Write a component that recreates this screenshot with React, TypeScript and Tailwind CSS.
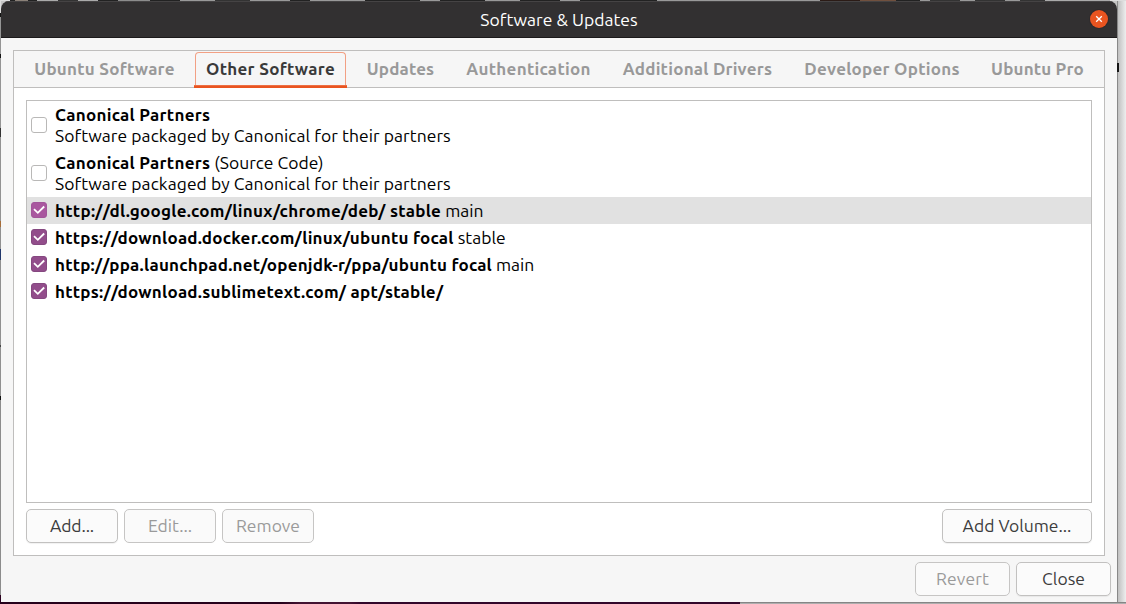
import type { ReactNode } from "react";

type Tab = { label: string; box: string };

const tabs: Tab[] = [
  { label: "Ubuntu Software", box: "w-[165px] tracking-[0.26px]" },
  { label: "Other Software", box: "w-[153px] tracking-[0.3px]" },
  { label: "Updates", box: "w-[93px] tracking-[0.18px]" },
  { label: "Authentication", box: "w-[149px] tracking-[0.3px]" },
  { label: "Additional Drivers", box: "w-[175px] tracking-[0.24px]" },
  { label: "Developer Options", box: "w-[180px] tracking-[0.25px]" },
  { label: "Ubuntu Pro", box: "w-[117px] tracking-[0.17px]" },
];

type Source = {
  name: string;
  nameClass: string;
  suffix?: string;
  description?: string;
  checked?: boolean;
  selected?: boolean;
};

const sources: Source[] = [
  {
    name: "Canonical Partners",
    nameClass: "tracking-[0.28px]",
    description: "Software packaged by Canonical for their partners",
  },
  {
    name: "Canonical Partners",
    nameClass: "tracking-[0.28px]",
    suffix: "(Source Code)",
    description: "Software packaged by Canonical for their partners",
  },
  {
    name: "http://dl.google.com/linux/chrome/deb/ stable",
    nameClass: "tracking-[0.28px]",
    suffix: "main",
    checked: true,
    selected: true,
  },
  {
    name: "https://download.docker.com/linux/ubuntu focal",
    nameClass: "tracking-[0.25px]",
    suffix: "stable",
    checked: true,
  },
  {
    name: "http://ppa.launchpad.net/openjdk-r/ppa/ubuntu focal",
    nameClass: "tracking-[0.21px]",
    suffix: "main",
    checked: true,
  },
  {
    name: "https://download.sublimetext.com/ apt/stable/",
    nameClass: "tracking-[0.25px]",
    checked: true,
  },
];

function Button({
  children,
  className,
  disabled = false,
}: {
  children: ReactNode;
  className: string;
  disabled?: boolean;
}) {
  return (
    <button
      disabled={disabled}
      className={`flex h-[34px] shrink-0 items-center justify-center rounded-[5px] border pb-0.5 ${
        disabled
          ? "border-[#c6c5c4] bg-[#fafafa] text-[#9a9a9a]"
          : "border-[#c2c1c0] bg-[#fbfbfb] text-[#3d3d3d] shadow-[0_1px_1px_rgba(0,0,0,0.06)]"
      } ${className}`}
    >
      {children}
    </button>
  );
}

function CheckBox({ checked, light }: { checked?: boolean; light?: boolean }) {
  if (!checked) {
    return <span className="size-4 shrink-0 rounded-[3px] border border-[#b9b8b7] bg-white" />;
  }
  return (
    <span
      className={`flex size-4 shrink-0 items-center justify-center rounded-[3px] border ${
        light ? "border-[#a2569a] bg-[#a9589f]" : "border-[#854880] bg-[#924d8b]"
      }`}
    >
      <svg viewBox="0 0 14 14" className="size-3.5" fill="none" stroke="white" strokeWidth="1.8">
        <path d="M2 6.2 L5.8 9.8 L12.2 3.5" />
      </svg>
    </span>
  );
}

export default function App() {
  return (
    <div className="flex h-[604px] w-[1126px] flex-col overflow-hidden bg-[#8f8f8f] font-['Ubuntu','Noto_Sans',sans-serif] text-[17.5px] leading-[21px]">
      <div className="h-px shrink-0 bg-[linear-gradient(90deg,#ddd_0_10px,#222_10px_15px,#8b8178_15px_28px,#222_28px_37px,#aaa_37px_58px,#333_58px_78px,#aaa_78px_98px,#222_98px_118px,#8c8c8c_118px_150px,#222_150px_180px,#999_180px_215px,#333_215px_250px,#999_250px_290px,#222_290px_310px,#999_310px_365px,#222_365px_420px,#999_420px_440px,#222_440px_485px,#999_485px_520px,#222_520px_560px,#999_560px_580px,#222_580px_657px,#999_657px_820px,#2b1b16_820px_860px,#70503e_860px_896px,#222_896px_920px,#999_920px_930px,#333_930px_960px,#999_960px_975px,#333_975px_1005px,#999_1005px_1020px,#333_1020px_1045px,#aaa_1045px_1110px,#ddd_1110px)]" />
      <div className="flex h-[601px] shrink-0 bg-[#c4c4c4]">
        <div className="w-px shrink-0 bg-[linear-gradient(180deg,#ddd_0_12px,#151515_12px_16px,#959595_16px_53px,#151515_53px_57px,#959595_57px_127px,#333_127px_136px,#929292_136px_220px,#a66c38_220px_226px,#909090_226px_248px,#20366b_248px_259px,#909090_259px_344px,#444_344px_346px,#909090_346px_395px,#111_395px_399px,#8c8c8c_399px_594px,#2b001e_594px)]" />
        <main className="flex w-[1116px] shrink-0 flex-col overflow-hidden rounded-t-[8px] bg-[#f6f6f6]">
          <header className="grid h-[37px] shrink-0 grid-cols-[1fr_auto_1fr] items-center border-b border-[#1c1a1b] bg-[#323031] text-white shadow-[inset_0_1px_0_#454344]">
            <span />
            <h1 className="tracking-[0.03px]">Software &amp; Updates</h1>
            <button className="mr-[9px] flex size-[18px] items-center justify-center justify-self-end rounded-full bg-[#e95420] ring-1 ring-[#2a2425]/40">
              <svg viewBox="0 0 8 8" className="size-2" stroke="white" strokeWidth="1.3">
                <path d="M1.2 1.2 L6.8 6.8 M6.8 1.2 L1.2 6.8" />
              </svg>
            </button>
          </header>

          <div className="flex grow flex-col pt-3">
            <section className="ml-3 flex h-[506px] w-[1092px] flex-col border border-[#bfbebd] bg-white">
              <nav className="flex h-[37px] shrink-0 gap-[7px] border-b border-[#bfbebd] bg-[#f6f6f6] pl-2 text-[17px] font-bold text-[#999]">
                {tabs.map((tab) =>
                  tab.label === "Other Software" ? (
                    <div
                      key={tab.label}
                      className={`flex h-[37px] flex-col items-center pt-px text-[#3a3a3a] ${tab.box}`}
                    >
                      <div className="flex h-[33px] w-[151px] items-center justify-center rounded-t-[4px] border border-b-0 border-[#f2a084] pb-0.5">
                        {tab.label}
                      </div>
                      <div className="h-[3px] w-full bg-[#e95420] shadow-[inset_0_1px_0_#ed6f43]" />
                    </div>
                  ) : (
                    <div
                      key={tab.label}
                      className={`flex h-9 items-center justify-center whitespace-nowrap pb-[2px] ${tab.box}`}
                    >
                      {tab.label}
                    </div>
                  ),
                )}
              </nav>

              <div className="flex grow flex-col px-3 pt-3">
                <ul className="h-[403px] shrink-0 border border-[#bfbebd] bg-white text-black">
                  {sources.map((source, index) => (
                    <li
                      key={index}
                      className={`flex gap-2 whitespace-nowrap pl-1 pt-[3px] ${
                        source.description ? "h-12" : "h-[27px]"
                      } ${source.selected ? "bg-[#e1e1e1]" : ""}`}
                    >
                      <div className={source.description ? "flex pt-[13px]" : "flex pt-[2px]"}>
                        <CheckBox checked={source.checked} light={source.selected} />
                      </div>
                      <div>
                        <div className="h-[21px]">
                          <strong className={`text-[17px] ${source.nameClass}`}>{source.name}</strong>
                          {source.suffix && <span> {source.suffix}</span>}
                        </div>
                        {source.description && (
                          <div className="tracking-[0.055px]">{source.description}</div>
                        )}
                      </div>
                    </li>
                  ))}
                </ul>

                <div className="mt-1.5 flex gap-1.5">
                  <Button className="w-[92px] tracking-[-0.1px]">Add...</Button>
                  <Button disabled className="w-[92px]">Edit...</Button>
                  <Button disabled className="w-[92px]">Remove</Button>
                  <Button className="ml-auto w-[150px]">Add Volume...</Button>
                </div>
              </div>
            </section>

            <footer className="mt-1.5 flex justify-end gap-1.5 pr-1.5">
              <Button disabled className="w-[95px] tracking-[0.1px]">Revert</Button>
              <Button className="w-[95px]">Close</Button>
            </footer>
          </div>
        </main>
        <div className="w-[9px] shrink-0 bg-[linear-gradient(90deg,#888_0_1px,#c0c0c0_1px,#eee_100%)]">
          <div className="mt-[62px] h-[9px] w-0.5 bg-[#151515]" />
        </div>
      </div>
      <div className="flex h-0.5 shrink-0">
        <div className="w-[740px] bg-[linear-gradient(90deg,#26001b_0_280px,#431332_300px_350px,#32062a_360px)]" />
        <div className="grow border-t border-[#858585] bg-[#adadad]" />
      </div>
    </div>
  );
}
